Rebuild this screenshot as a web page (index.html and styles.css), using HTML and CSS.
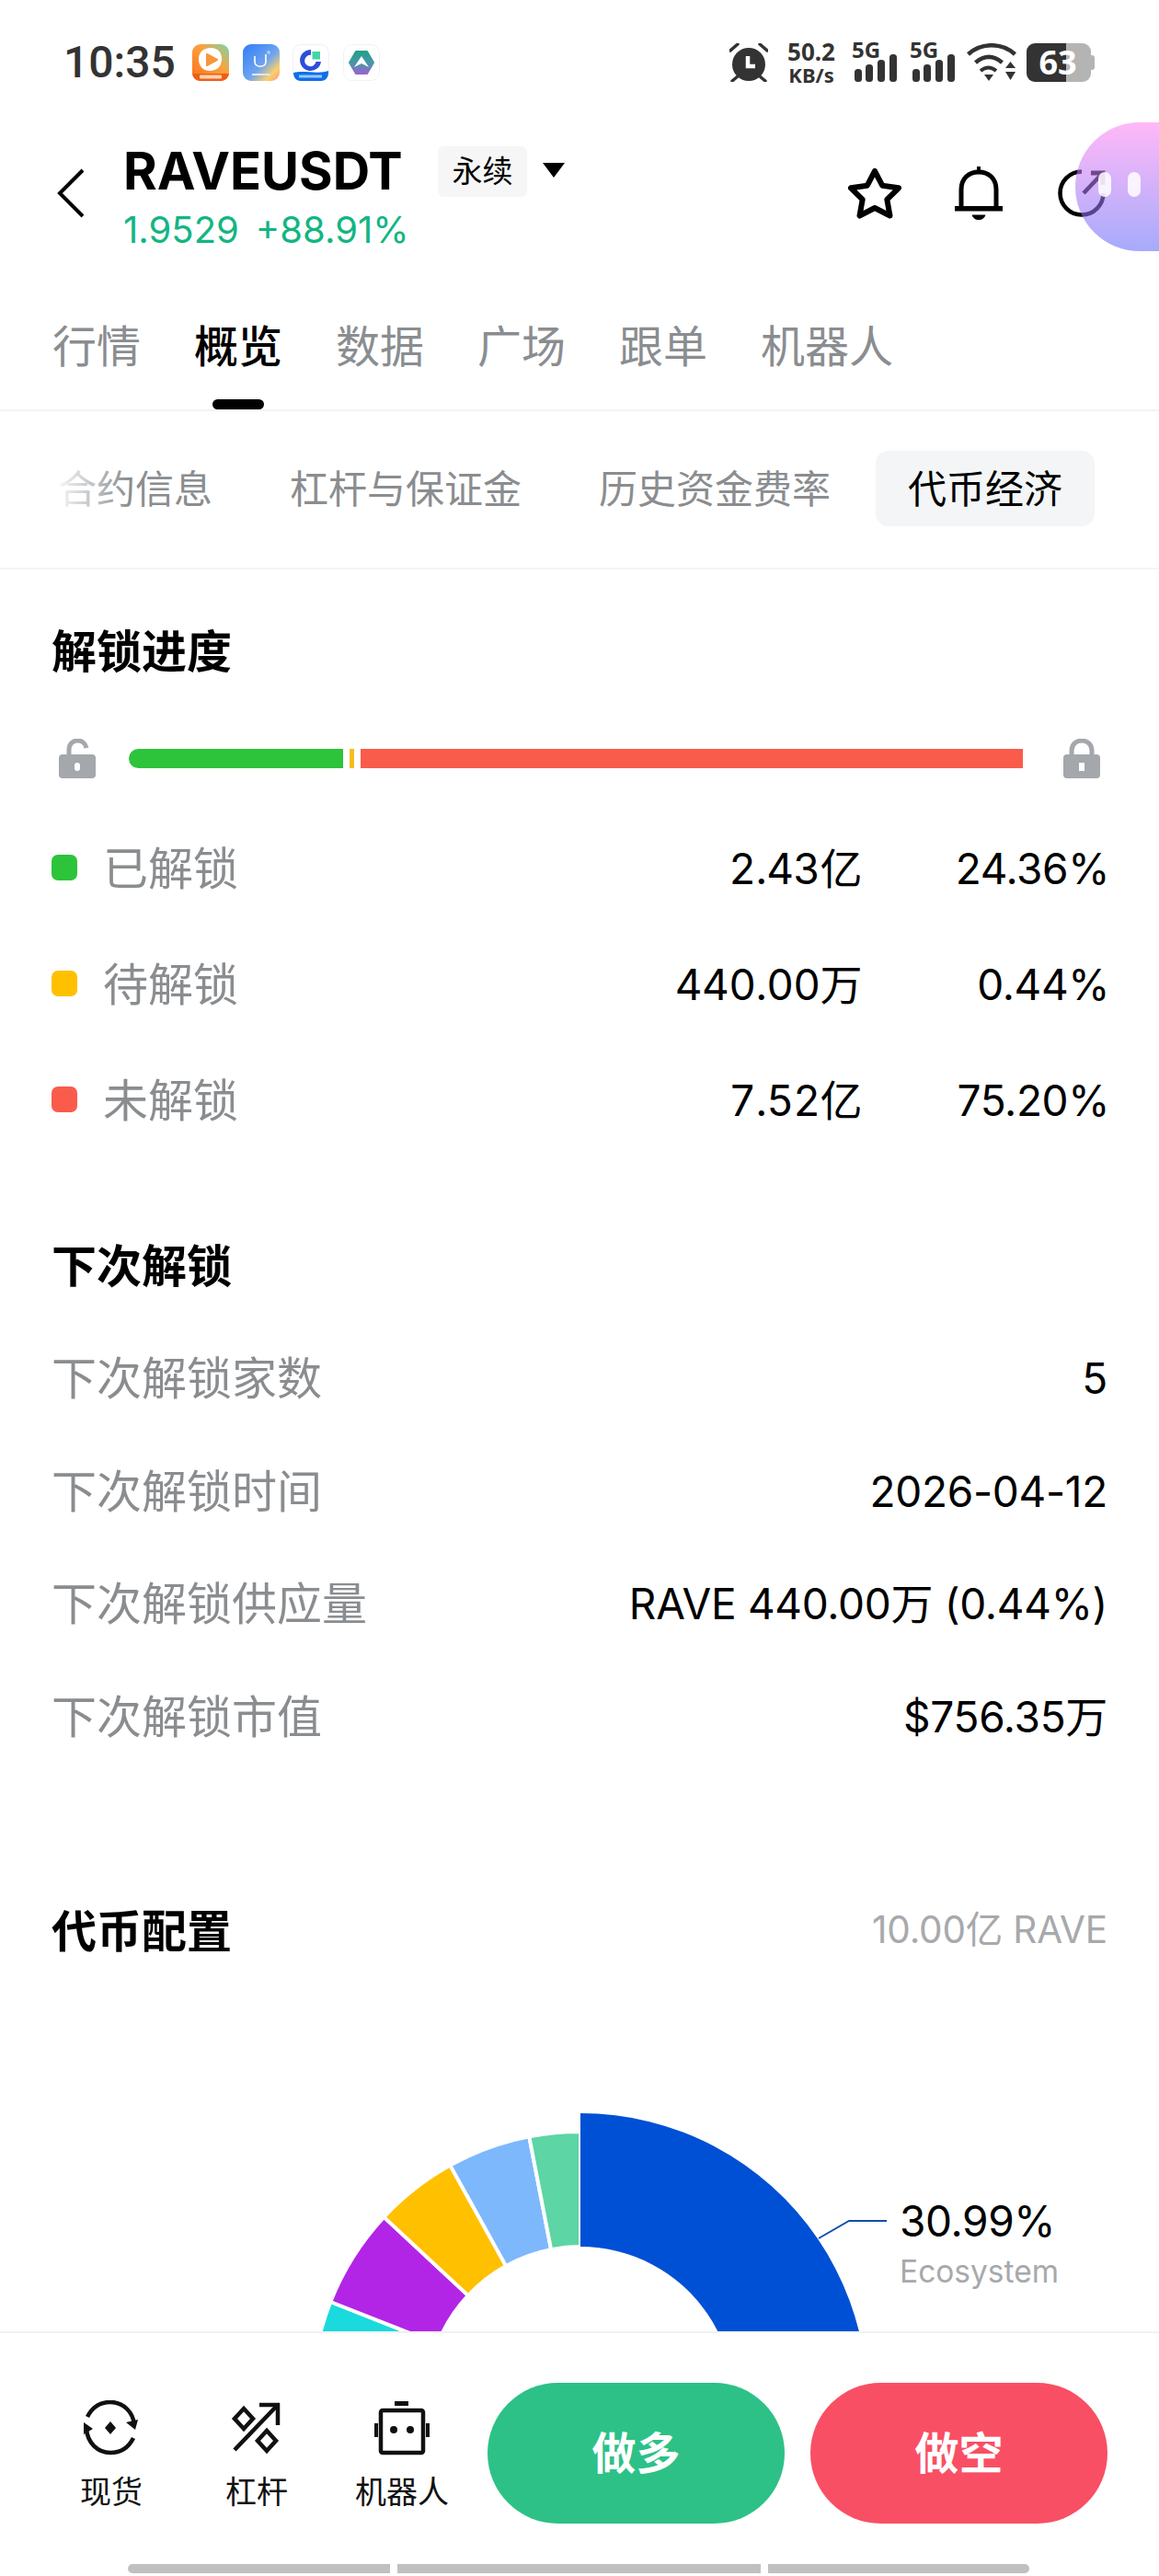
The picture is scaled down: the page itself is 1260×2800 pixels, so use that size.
FILE: index.html
```html
<!DOCTYPE html>
<html lang="zh-CN">
<head>
<meta charset="UTF-8">
<title>RAVEUSDT</title>
<link rel="stylesheet" href="styles.css">
</head>
<body>

<!-- ===== STATUS BAR ===== -->
<div class="status-bar">
  <span class="clock">10:35</span>
  <div class="app-icons">
    <svg class="app-icon" viewBox="0 0 40 40">
      <defs>
        <linearGradient id="app1" x1="0" y1="1" x2="1" y2="0"><stop offset="0" stop-color="#f9701c"/><stop offset=".6" stop-color="#fba33f"/><stop offset="1" stop-color="#74d8ac"/></linearGradient>
        <linearGradient id="app2" x1="0" y1="0" x2="1" y2="1"><stop offset="0" stop-color="#2f7df6"/><stop offset=".55" stop-color="#6fa4f0"/><stop offset=".8" stop-color="#fbcf6c"/><stop offset="1" stop-color="#f79c7e"/></linearGradient>
        <linearGradient id="app4" x1="0" y1="0" x2="0" y2="1"><stop offset="0" stop-color="#24a08c"/><stop offset=".55" stop-color="#4a96a8"/><stop offset="1" stop-color="#9b62d0"/></linearGradient>
      </defs>
      <rect width="40" height="40" rx="9" fill="url(#app1)"/>
      <path d="M0 32H40V31C40 36 36 40 31 40H9C4 40 0 36 0 31Z" fill="#ee5f12"/>
      <rect x="8" y="33.5" width="24" height="4" rx="1" fill="#fbd4b4"/>
      <path d="M20 4C28 4 32 9 32 16C32 24 27 29 19 29C11 29 7 23 7 16C7 9 12 4 20 4Z" fill="#fff"/>
      <path d="M16 11L27 17L16 23Z" fill="#f7963a" stroke="#f7963a" stroke-width="2" stroke-linejoin="round"/>
    </svg>
    <svg class="app-icon" viewBox="0 0 40 40">
      <rect width="40" height="40" rx="9" fill="url(#app2)"/>
      <path d="M13 13V19C13 26 25 26 25 19V11" fill="none" stroke="#fff" stroke-width="1.6"/>
      <circle cx="28" cy="9" r="1.3" fill="none" stroke="#fff" stroke-width=".7"/>
      <rect x="10" y="32" width="20" height="2" fill="#dbe8fb"/>
    </svg>
    <svg class="app-icon" viewBox="0 0 40 40">
      <rect x=".5" y=".5" width="39" height="39" rx="9" fill="#fff" stroke="#f0f0f0"/>
      <path d="M20 6A11.500 11.500 0 1 0 31 19H25.500A6.200 6.200 0 1 1 20 11.800Z" fill="#2c4fd8"/>
      <rect x="21.500" y="8" width="8.500" height="8.500" fill="#42d6a4"/>
      <path d="M1 31C12 28 28 33 39 29V31C39 36 36 40 31 40H9C4 40 1 36 1 31Z" fill="#0f6fe8"/>
      <rect x="7" y="33.500" width="25" height="3" fill="#9cc6f7"/>
    </svg>
    <svg class="app-icon" viewBox="0 0 40 40">
      <rect x=".5" y=".5" width="39" height="39" rx="9" fill="#fff" stroke="#f2f2f2"/>
      <path d="M14 8H26L33 20L26 32H14L7 20Z" fill="url(#app4)" stroke="url(#app4)" stroke-width="2" stroke-linejoin="round"/>
      <path d="M20 13L28 25L20 21L12 25Z" fill="#fff"/>
    </svg>
  </div>

  <div class="status-right">
    <svg class="st-alarm" viewBox="0 0 42 42" fill="#333">
      <circle cx="21" cy="23" r="18"/>
      <path d="M1 8L9 1M41 8L33 1M9 36L3 41M33 36L39 41" stroke="#333" stroke-width="3.4" stroke-linecap="round"/>
      <path d="M20 14V25H28" fill="none" stroke="#fff" stroke-width="4.5"/>
    </svg>
    <div class="st-speed">50.2<br><small>KB/s</small></div>
    <svg class="st-signal" viewBox="0 -12 50 54">
      <text x="0" y="16" class="st-5g">5G</text>
      <rect x="3" y="28" width="8" height="14" rx="3.5" fill="#333"/>
      <rect x="15" y="23" width="8" height="19" rx="3.5" fill="#333"/>
      <rect x="28" y="18" width="8" height="24" rx="3.5" fill="#333"/>
      <rect x="41" y="12" width="8" height="30" rx="3.5" fill="#333"/>
    </svg>
    <svg class="st-signal st-signal-2" viewBox="0 -12 50 54">
      <text x="0" y="16" class="st-5g">5G</text>
      <rect x="3" y="28" width="8" height="14" rx="3.5" fill="#333"/>
      <rect x="15" y="23" width="8" height="19" rx="3.5" fill="#333"/>
      <rect x="28" y="18" width="8" height="24" rx="3.5" fill="#333"/>
      <rect x="41" y="12" width="8" height="30" rx="3.5" fill="#333"/>
    </svg>
    <svg class="st-wifi" viewBox="0 0 54 42" fill="none" stroke="#333" stroke-width="4.6">
      <path d="M1.5 12C16 -1 38 -1 52.500 12"/>
      <path d="M9.500 21C19 13 29 13 38.500 21"/>
      <path d="M15 30C20.500 25.500 26.500 25.500 32 30" stroke-width="4"/>
      <path d="M19 34H29L24 41Z" fill="#333" stroke="none"/>
      <path d="M42 27H53L47.500 20Z M42 31H53L47.500 40Z" fill="#333" stroke="none"/>
    </svg>
    <div class="st-battery"><span class="st-battery-num">63</span></div>
  </div>
</div>

<!-- ===== HEADER ===== -->
<div class="top-header">
  <svg class="back-icon" viewBox="0 0 30 54" fill="none" stroke="#000" stroke-width="4"><path d="M28 2L3 27L28 52"/></svg>
  <div class="pair-info">
    <div class="pair-row">
      <span class="pair-name">RAVEUSDT</span>
      <span class="pair-tag">永续</span>
      <span class="pair-caret"></span>
    </div>
    <div class="pair-price"><span>1.9529</span><span>+88.91%</span></div>
  </div>
  <div class="header-icons">
    <svg class="icon-star" viewBox="0 0 58 56" fill="none" stroke="#000" stroke-width="6" stroke-linejoin="round"><path d="M29 4L37.200 19.700L55 22.300L42.300 34.800L45.500 52.500L29 44L12.500 52.500L15.700 34.800L3 22.300L20.800 19.700Z"/></svg>
    <svg class="icon-bell" viewBox="0 0 52 58"><path d="M7 44V25C7 13 15 6 26 6C37 6 45 13 45 25V44" fill="none" stroke="#000" stroke-width="5"/><rect x="24" y="0" width="4" height="6"/><rect x="0" y="43" width="52" height="5.500"/><path d="M18.500 52.500H33.500C32.500 56 30 58 26 58C22 58 19.500 56 18.500 52.500Z"/></svg>
    <svg class="icon-share" viewBox="0 0 52 52" fill="none" stroke="#000" stroke-width="4.500"><path d="M26 2.500A23.500 23.500 0 1 0 49.500 26"/><path d="M28 26L47 6"/><path d="M36 4H49V17" stroke-width="5"/></svg>
  </div>
</div>

<!-- floating assistant -->
<div class="float-ball"><i></i><i></i></div>

<!-- ===== TABS ===== -->
<div class="main-tabs">
  <span class="main-tab">行情</span>
  <span class="main-tab is-active">概览</span>
  <span class="main-tab">数据</span>
  <span class="main-tab">广场</span>
  <span class="main-tab">跟单</span>
  <span class="main-tab">机器人</span>
</div>

<div class="sub-tabs">
  <span class="sub-tab">合约信息</span>
  <span class="sub-tab">杠杆与保证金</span>
  <span class="sub-tab">历史资金费率</span>
  <span class="sub-tab is-active">代币经济</span>
  <div class="sub-fade"></div>
</div>

<!-- ===== UNLOCK PROGRESS ===== -->
<div class="section">
  <h2 class="section-title title-progress">解锁进度</h2>

  <div class="progress-row">
    <svg class="lock-icon" viewBox="0 0 40 43"><path d="M11 20V12C11 6 15 2 20 2C25 2 29 5 30 10" fill="none" stroke="#a4a7ab" stroke-width="5"/><rect y="17" width="40" height="26" rx="4" fill="#a4a7ab"/><rect x="17" y="26" width="6" height="9" rx="3" fill="#fff"/></svg>
    <div class="progress-bar">
      <span class="seg seg-green"></span>
      <span class="seg seg-yellow"></span>
      <span class="seg seg-red"></span>
    </div>
    <svg class="lock-icon" viewBox="0 0 40 43"><path d="M9 20V13C9 6 14 2 20 2C26 2 31 6 31 13V20" fill="none" stroke="#a4a7ab" stroke-width="5"/><rect y="17" width="40" height="26" rx="4" fill="#a4a7ab"/><rect x="17" y="26" width="6" height="9" fill="#fff"/></svg>
  </div>

  <div class="legend-list">
    <div class="legend-row"><span class="legend-dot dot-green"></span><span class="legend-label">已解锁</span><span class="legend-amount">2.43亿</span><span class="legend-pct">24.36%</span></div>
    <div class="legend-row"><span class="legend-dot dot-yellow"></span><span class="legend-label">待解锁</span><span class="legend-amount">440.00万</span><span class="legend-pct">0.44%</span></div>
    <div class="legend-row"><span class="legend-dot dot-red"></span><span class="legend-label">未解锁</span><span class="legend-amount">7.52亿</span><span class="legend-pct">75.20%</span></div>
  </div>

  <!-- ===== NEXT UNLOCK ===== -->
  <h2 class="section-title title-next">下次解锁</h2>
  <div class="info-list">
    <div class="info-row"><span class="info-label">下次解锁家数</span><span class="info-value">5</span></div>
    <div class="info-row"><span class="info-label">下次解锁时间</span><span class="info-value">2026-04-12</span></div>
    <div class="info-row"><span class="info-label">下次解锁供应量</span><span class="info-value">RAVE 440.00万 (0.44%)</span></div>
    <div class="info-row"><span class="info-label">下次解锁市值</span><span class="info-value">$756.35万</span></div>
  </div>

  <!-- ===== ALLOCATION ===== -->
  <div class="alloc-head">
    <h2 class="section-title">代币配置</h2>
    <span class="alloc-total">10.00亿 RAVE</span>
  </div>
</div>

<div class="chart">
  <svg class="chart-svg" viewBox="0 0 1260 405">
    <g stroke="#fff" stroke-width="4" stroke-linejoin="round">
      <path d="M343.400 530.700A292 292 0 0 1 359.300 373L475.600 418.800A167 167 0 0 0 466.500 509Z" fill="#1adadd"/>
      <path d="M359.300 373A292 292 0 0 1 417.400 280.900L508.900 366.100A167 167 0 0 0 475.600 418.800Z" fill="#b225e6"/>
      <path d="M417.400 280.900A292 292 0 0 1 489.400 224.600L550 333.900A167 167 0 0 0 508.900 366.100Z" fill="#ffc000"/>
      <path d="M489.400 224.600A292 292 0 0 1 575.300 193.400L599.100 316.100A167 167 0 0 0 550 333.900Z" fill="#7db8fd"/>
      <path d="M575.300 193.400A292 292 0 0 1 631 188V313A167 167 0 0 0 599.100 316.100Z" fill="#5dd5a5"/>
    </g>
    <path d="M631 168A312 312 0 0 1 921.200 594.700L786.300 541.400A167 167 0 0 0 631 313Z" fill="#0050d5"/>
    <path d="M890 304L923 285H964" fill="none" stroke="#0f4fa8" stroke-width="2"/>
  </svg>
  <div class="chart-label">
    <div class="chart-pct">30.99%</div>
    <div class="chart-name">Ecosystem</div>
  </div>
</div>

<!-- ===== BOTTOM BAR ===== -->
<div class="bottom-bar">
  <div class="bottom-actions">
    <div class="tools">
      <div class="tool">
        <svg class="tool-icon" viewBox="0 0 60 60" fill="none" stroke="#111" stroke-width="4.500">
          <path d="M4 18C9 8 18 2 29 2C43 2 54 13 55 27"/>
          <path d="M3 31C4 46 15 57 29 57C40 57 49 51 54 41"/>
          <path d="M46 24L56 32L59 21Z" fill="#111" stroke="none"/>
          <path d="M0 24L10 31L0 37Z" fill="#111" stroke="none"/>
          <path d="M29 23L35 30L29 37L23 30Z" fill="#111" stroke="none"/>
        </svg>
        <span class="tool-label">现货</span>
      </div>
      <div class="tool">
        <svg class="tool-icon" viewBox="0 0 60 60" fill="none" stroke="#111" stroke-width="4.500">
          <path d="M6 54L52 6"/>
          <path d="M33 5H53V27"/>
          <path d="M16 9L26 20L16 31L6 20Z"/>
          <path d="M41 33L51 44L41 55L31 44Z"/>
        </svg>
        <span class="tool-label">杠杆</span>
      </div>
      <div class="tool">
        <svg class="tool-icon" viewBox="0 0 60 60">
          <rect x="7" y="11" width="46" height="46" rx="2" fill="none" stroke="#111" stroke-width="4.500"/>
          <rect x="22" y="1" width="15" height="5" fill="#111"/>
          <rect x="0" y="25" width="4" height="15" fill="#111"/>
          <rect x="56" y="25" width="4" height="15" fill="#111"/>
          <circle cx="21" cy="32" r="4" fill="#111"/>
          <circle cx="39" cy="32" r="4" fill="#111"/>
        </svg>
        <span class="tool-label">机器人</span>
      </div>
    </div>
    <div class="trade-btn btn-long">做多</div>
    <div class="trade-btn btn-short">做空</div>
  </div>
  <div class="home-bar"><span class="home-seg seg-a"></span><span class="home-seg seg-b"></span><span class="home-seg seg-c"></span></div>
</div>

</body>
</html>
```

FILE: styles.css
```css
* { box-sizing: border-box; }

html, body {
  margin: 0;
  background: #fff;
}

body {
  position: relative;
  width: 1260px;
  height: 2800px;
  overflow: hidden;
  color: #000;
  font-family: Inter, "Noto Sans CJK SC", sans-serif;
}

/* ===== STATUS BAR ===== */
.status-bar {
  display: flex;
  align-items: flex-start;
  height: 137px;
  padding: 47px 0 0 69px;
}

.clock {
  font-family: Roboto, sans-serif;
  font-size: 48px;
  font-weight: 500;
  line-height: 42px;
  color: #333;
  width: 140px;
}

.app-icons {
  display: flex;
  gap: 14.500px;
  margin-top: 1px;
}

.app-icon {
  display: block;
  width: 40px;
  height: 40px;
}

.status-right {
  display: flex;
  align-items: flex-start;
  margin-left: auto;
  padding-right: 74px;
}

.st-alarm { width: 42px; height: 42px; display: block; }

.st-speed {
  width: 52px;
  margin-left: 21px;
  margin-top: -3px;
  font-family: "Noto Sans", sans-serif;
  font-weight: 700;
  font-size: 26px;
  line-height: 24px;
  text-align: center;
  white-space: nowrap;
  color: #333;
}

.st-speed small { font-size: 22px; }

.st-signal { width: 50px; height: 54px; display: block; margin-left: 18px; margin-top: -12px; }
.st-signal-2 { margin-left: 13px; }

.st-5g {
  font-family: "Noto Sans", sans-serif;
  font-weight: 700;
  font-size: 24px;
  fill: #333;
}

.st-wifi { width: 54px; height: 42px; display: block; margin-left: 12px; }

.st-battery {
  position: relative;
  display: flex;
  align-items: center;
  justify-content: center;
  width: 70px;
  height: 42px;
  margin-left: 11px;
  padding-right: 2px;
  border-radius: 9px;
  background: linear-gradient(to right, #333 61%, #b4b4b4 61%);
}

.st-battery::after {
  content: "";
  position: absolute;
  right: -4px;
  top: 13px;
  width: 4px;
  height: 16px;
  border-radius: 0 3px 3px 0;
  background: #b4b4b4;
}

.st-battery-num {
  font-family: "Noto Sans", sans-serif;
  font-weight: 700;
  font-size: 36px;
  line-height: 42px;
  color: #fff;
}

/* ===== HEADER ===== */
.top-header {
  display: flex;
  align-items: flex-start;
  height: 163px;
  padding: 19px 58px 0 62px;
}

.back-icon {
  display: block;
  width: 30px;
  height: 54px;
  margin-top: 27px;
}

.pair-info { margin-left: 42px; }

.pair-row {
  display: flex;
  align-items: center;
  height: 60px;
}

.pair-name {
  font-size: 56px;
  font-weight: 700;
  line-height: 60px;
  width: 342px;
}

.pair-tag {
  display: flex;
  align-items: center;
  justify-content: center;
  width: 97px;
  height: 55px;
  border-radius: 6px;
  background: #f6f6f6;
  font-size: 33px;
  line-height: 40px;
}

.pair-caret {
  width: 0;
  height: 0;
  margin-left: 17px;
  margin-top: -2px;
  border-left: 12px solid transparent;
  border-right: 12px solid transparent;
  border-top: 16px solid #000;
}

.pair-price {
  display: flex;
  gap: 18px;
  margin-top: 13px;
  font-size: 40px;
  line-height: 42px;
  color: #13b583;
}

.header-icons {
  display: flex;
  align-items: center;
  gap: 58px;
  margin-left: auto;
  margin-top: 25px;
}

.icon-star { width: 58px; height: 56px; display: block; }
.icon-bell { width: 52px; height: 58px; display: block; }
.icon-share { width: 52px; height: 52px; display: block; margin-left: 2px; }

.float-ball {
  position: absolute;
  top: 133px;
  right: 0;
  display: flex;
  gap: 18px;
  width: 91px;
  height: 140px;
  padding: 54px 0 0 25px;
  border-radius: 70px 0 0 70px;
  background: linear-gradient(to bottom, rgba(255, 133, 243, .58), rgba(102, 110, 248, .58));
}

.float-ball i {
  display: block;
  width: 14px;
  height: 27px;
  border-radius: 7px;
  background: rgba(255, 255, 255, .85);
}

/* ===== TABS ===== */
.main-tabs {
  display: flex;
  gap: 58px;
  height: 147px;
  padding-left: 57px;
  border-bottom: 2px solid #f3f3f3;
}

.main-tab {
  position: relative;
  font-size: 48px;
  line-height: 153px;
  height: 145px;
  color: #8a8d90;
}

.main-tab.is-active {
  color: #000;
  font-weight: 500;
}

.main-tab.is-active::after {
  content: "";
  position: absolute;
  left: 20px;
  bottom: 0;
  width: 56px;
  height: 11px;
  border-radius: 6px;
  background: #000;
}

.sub-tabs {
  position: relative;
  display: flex;
  align-items: center;
  gap: 14px;
  height: 172px;
  padding: 0 0 2px 28px;
  border-bottom: 2px solid #f5f5f5;
}

.sub-tab {
  padding: 0 35px;
  height: 82px;
  font-size: 42px;
  line-height: 84px;
  color: #8a8d90;
  white-space: nowrap;
}

.sub-tab.is-active {
  color: #000;
  background: #f3f5f6;
  border-radius: 14px;
}

.sub-fade {
  position: absolute;
  left: 30px;
  top: 20px;
  width: 110px;
  height: 130px;
  background: linear-gradient(to right, #fff 25%, rgba(255, 255, 255, 0));
}

/* ===== SECTIONS ===== */
.section {
  padding: 0 56px;
}

.section-title {
  margin: 0;
  font-size: 49px;
  font-weight: 700;
  line-height: 62px;
  height: 60px;
}

.title-progress { margin-top: 59px; }
.title-next { margin-top: 88px; }

.progress-row {
  display: flex;
  align-items: center;
  justify-content: space-between;
  height: 43px;
  margin-top: 65px;
  padding: 0 8px;
}

.lock-icon { width: 40px; height: 43px; display: block; }

.progress-bar {
  display: flex;
  width: 972px;
  height: 21px;
  margin-right: 8px;
}

.seg { display: block; height: 100%; }
.seg-green { width: 233px; background: #2dc33a; border-radius: 11px 0 0 11px; }
.seg-yellow { width: 5px; margin-left: 7px; background: #f5bd1f; }
.seg-red { width: 720px; margin-left: 7px; background: #fa5c4c; }

.legend-list { margin-top: 34px; }

.legend-row {
  display: flex;
  align-items: center;
  height: 126px;
  font-size: 46px;
  line-height: 60px;
  letter-spacing: -.4px;
}

.legend-dot {
  width: 28px;
  height: 28px;
  border-radius: 7px;
}

.dot-green { background: #2dc33a; }
.dot-yellow { background: #ffc000; }
.dot-red { background: #fa5c4c; }

.legend-label {
  margin-left: 28px;
  padding-top: 3px;
  flex: 1;
  font-size: 49px;
  letter-spacing: 0;
  color: #8a8d90;
}

.legend-amount {
  padding-top: 2px;
  margin-right: 1px;
  letter-spacing: -.6px;
  font-variant-numeric: tabular-nums;
}

.legend-pct {
  width: 268px;
  padding-top: 2px;
  margin-right: -2px;
  text-align: right;
}

.info-list { margin-top: 31px; }

.info-row {
  display: flex;
  align-items: center;
  justify-content: space-between;
  height: 122.500px;
  font-size: 46px;
  line-height: 60px;
  letter-spacing: -.3px;
}

.info-label {
  padding-top: 2px;
  font-size: 49px;
  letter-spacing: 0;
  color: #8a8d90;
}

.alloc-head {
  display: flex;
  align-items: center;
  justify-content: space-between;
  margin-top: 142px;
}

.alloc-total {
  font-size: 40.500px;
  line-height: 50px;
  color: #a7a9ac;
  letter-spacing: -.2px;
  margin-top: -2px;
}

/* ===== CHART ===== */
.chart {
  position: relative;
  height: 405px;
  overflow: hidden;
}

.chart-svg {
  display: block;
  width: 1260px;
  height: 405px;
}

.chart-label {
  position: absolute;
  left: 978px;
  top: 257px;
}

.chart-pct {
  font-size: 46px;
  line-height: 56px;
  letter-spacing: -.4px;
}

.chart-name {
  margin-top: 7px;
  font-size: 33.500px;
  line-height: 40px;
  color: #a7a9ac;
}

/* ===== BOTTOM BAR ===== */
.bottom-bar {
  height: 266px;
  padding-top: 54px;
  border-top: 2px solid #f1f1f1;
  background: #fff;
}

.bottom-actions {
  display: flex;
  align-items: flex-start;
  height: 153px;
  padding-left: 42px;
}

.tools {
  display: flex;
  margin-top: 19px;
  margin-right: 14px;
}

.tool {
  display: flex;
  flex-direction: column;
  align-items: center;
  width: 158px;
}

.tool-icon { width: 60px; height: 60px; display: block; }

.tool-label {
  margin-top: 19px;
  font-size: 34px;
  line-height: 42px;
  color: #111;
}

.trade-btn {
  width: 323px;
  height: 153px;
  border-radius: 77px;
  font-size: 48px;
  font-weight: 700;
  line-height: 153px;
  text-align: center;
  color: #fff;
}

.btn-long { background: #2dc187; }
.btn-short { margin-left: 28px; background: #f94f64; }

.home-bar {
  display: flex;
  gap: 8px;
  height: 10px;
  margin-top: 44px;
  padding-left: 139px;
}

.home-seg { display: block; height: 10px; background: #c0c0c0; }
.seg-a { width: 285px; border-radius: 5px 0 0 5px; }
.seg-b { width: 395px; }
.seg-c { width: 284px; border-radius: 0 5px 5px 0; }
```
